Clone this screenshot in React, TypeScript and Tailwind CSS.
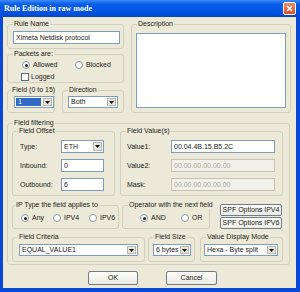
import React from "react";
import clsx from "clsx";

const font = "font-['Liberation_Sans',Arial,sans-serif] text-[7px] leading-[8px] text-[#1a1a1a]";

function Group({
    label,
    className,
    inner,
    legend,
    children,
}: {
    label: string;
    className?: string;
    inner?: string;
    legend?: string;
    children?: React.ReactNode;
}) {
    return (
        <fieldset className={clsx("min-w-0 rounded-[3px] border border-[#d0d0bf]", className)}>
            <legend className={clsx("whitespace-nowrap px-[1px] text-[7px] leading-[8px]", legend ?? "ml-[5px]")}>
                {label}
            </legend>
            <div className={inner}>{children}</div>
        </fieldset>
    );
}

function TextBox({
    value,
    className,
    disabled,
}: {
    value: string;
    className?: string;
    disabled?: boolean;
}) {
    return (
        <div
            className={clsx(
                "flex h-[13px] items-center border pl-[2px]",
                disabled
                    ? "border-[#c4c2b6] bg-[#f1f0ea] text-[#aca899]"
                    : "border-[#7f9db9] bg-white",
                className
            )}
        >
            {value}
        </div>
    );
}

function Combo({
    value,
    className,
    selected,
}: {
    value: string;
    className?: string;
    selected?: boolean;
}) {
    return (
        <div className={clsx("flex h-[12px] items-stretch border border-[#7f9db9] bg-white", className)}>
            <div
                className={clsx(
                    "flex flex-1 items-center whitespace-nowrap pl-[2px]",
                    selected && "m-[1px] bg-[#316ac5] text-white"
                )}
            >
                {value}
            </div>
            <div className="m-[1px] flex w-[9px] items-center justify-center border border-[#b9b7a9] bg-[#e8e6dc]">
                <svg width="5" height="3" viewBox="0 0 5 3">
                    <path d="M0 0H5L2.5 3Z" fill="#111" />
                </svg>
            </div>
        </div>
    );
}

function Radio({ checked, label, className }: { checked?: boolean; label: string; className?: string }) {
    return (
        <div className={clsx("flex items-center", className)}>
            <div className="flex h-[8px] w-[8px] items-center justify-center rounded-full border border-[#8a98a6] bg-white">
                {checked && <div className="h-[3px] w-[3px] rounded-full bg-[#222]" />}
            </div>
            <span className="ml-[3px]">{label}</span>
        </div>
    );
}

function Button({ label, className }: { label: string; className?: string }) {
    return (
        <div
            className={clsx(
                "flex items-center justify-center whitespace-nowrap rounded-[2px] border border-[#6f7c8a] bg-[linear-gradient(to_bottom,#fbfbf8,#ecebe4)]",
                className
            )}
        >
            {label}
        </div>
    );
}

export default function App() {
    return (
        <div className={clsx("flex h-[292px] w-[300px] flex-col bg-[#0848d8]", font)}>
            {/* title bar */}
            <div className="flex h-[17px] items-center justify-between bg-[linear-gradient(to_bottom,#3a8cf6,#0a5ce9_25%,#0353e2_70%,#0347cc)] pl-[4px] pr-[4px]">
                <span className="font-['Liberation_Serif','Times_New_Roman',serif] text-[8px] font-bold leading-[10px] text-white">
                    Rule Edition in raw mode
                </span>
                <div className="flex h-[13px] w-[13px] items-center justify-center rounded-[2px] border border-white bg-[linear-gradient(to_bottom,#ef8a66,#d8502a)]">
                    <svg width="7" height="7" viewBox="0 0 7 7">
                        <path d="M1 1L6 6M6 1L1 6" stroke="white" strokeWidth="1.6" />
                    </svg>
                </div>
            </div>

            {/* body */}
            <div className="mb-[4px] ml-[3px] mr-[4px] flex flex-1 flex-col bg-[#ece9d8] pl-[4px] pt-[3px]">
                <div className="flex">
                    <div className="flex w-[117px] flex-col">
                        <Group label="Rule Name" className="h-[29px]" inner="pl-[5px] pt-[3px]">
                            <TextBox value="Ximeta Netdisk protocol" className="w-[107px]" />
                        </Group>
                        <Group label="Packets are:" className="mt-[1px] h-[33px]" inner="pl-[14px] pt-[3px]">
                            <div className="flex h-[8px]">
                                <Radio checked label="Allowed" className="w-[53px]" />
                                <Radio label="Blocked" />
                            </div>
                            <div className="-ml-[1px] mt-[4px] flex h-[8px] items-center">
                                <div className="h-[8px] w-[8px] border border-[#4f6b85] bg-white" />
                                <span className="ml-[2px]">Logged</span>
                            </div>
                        </Group>
                        <div className="mt-[3px] flex">
                            <Group label="Field (0 to 15)" legend="ml-[3px]" className="h-[27px] w-[48px]" inner="pl-[6px] pt-[2px]">
                                <Combo value="1" selected className="w-[40px]" />
                            </Group>
                            <Group label="Direction" className="ml-[7px] h-[27px] w-[62px]" inner="pl-[5px] pt-[2px]">
                                <Combo value="Both" className="w-[50px]" />
                            </Group>
                        </div>
                    </div>
                    <Group label="Description" className="ml-[7px] h-[93px] w-[160px]" inner="pl-[4px] pt-[5px]">
                        <div className="h-[75px] w-[150px] border border-[#7f9db9] bg-white" />
                    </Group>
                </div>

                <Group label="Field filtering" className="mt-[6px] h-[146px] w-[283px]" inner="pl-[4px]">
                    <div className="flex">
                        <Group label="Field Offset" className="h-[69px] w-[103px]" inner="pl-[7px] pt-[5px]">
                            <div className="flex items-center">
                                <span className="w-[41px]">Type:</span>
                                <Combo value="ETH" className="h-[13px] w-[43px]" />
                            </div>
                            <div className="mt-[6px] flex items-center">
                                <span className="w-[41px]">Inbound:</span>
                                <TextBox value="0" className="w-[43px]" />
                            </div>
                            <div className="mt-[6px] flex items-center">
                                <span className="w-[41px]">Outbound:</span>
                                <TextBox value="6" className="w-[43px]" />
                            </div>
                        </Group>
                        <Group label="Field Value(s)" className="ml-[5px] h-[69px] w-[163px]" inner="pl-[6px] pt-[5px]">
                            <div className="flex items-center">
                                <span className="w-[44px]">Value1:</span>
                                <TextBox value="00.04.4B.15.B5.2C" className="w-[104px]" />
                            </div>
                            <div className="mt-[6px] flex items-center">
                                <span className="w-[44px]">Value2:</span>
                                <TextBox disabled value="00.00.00.00.00.00" className="w-[104px]" />
                            </div>
                            <div className="mt-[6px] flex items-center">
                                <span className="w-[44px]">Mask:</span>
                                <TextBox disabled value="00.00.00.00.00.00" className="w-[104px]" />
                            </div>
                        </Group>
                    </div>

                    <div className="mt-[5px] flex">
                        <Group label="IP Type the field applies to" legend="ml-[2px]" className="h-[28px] w-[107px]" inner="pl-[8px] pt-[5px]">
                            <div className="flex h-[8px]">
                                <Radio checked label="Any" className="w-[32px]" />
                                <Radio label="IPV4" className="w-[36px]" />
                                <Radio label="IPV6" />
                            </div>
                        </Group>
                        <Group label="Operator with the next field" legend="ml-[5px]" className="ml-[3px] h-[28px] w-[88px]" inner="pl-[17px] pt-[5px]">
                            <div className="flex h-[8px]">
                                <Radio checked label="AND" className="w-[41px]" />
                                <Radio label="OR" />
                            </div>
                        </Group>
                        <div className="ml-[10px] mt-[3px] flex flex-col gap-[1px]">
                            <Button label="SPF Options IPV4" className="h-[12px] w-[62px]" />
                            <Button label="SPF Options IPV6" className="h-[12px] w-[62px]" />
                        </div>
                    </div>

                    <div className="mt-[4px] flex">
                        <Group label="Field Criteria" className="h-[29px] w-[133px]" inner="pl-[6px] pt-[3px]">
                            <Combo value="EQUAL_VALUE1" className="w-[119px]" />
                        </Group>
                        <Group label="Field Size" className="ml-[3px] h-[29px] w-[47px]" inner="pl-[4px] pt-[3px]">
                            <Combo value="6 bytes" className="w-[38px]" />
                        </Group>
                        <Group label="Value Display Mode" className="ml-[5px] h-[29px] w-[83px]" inner="pl-[3px] pt-[3px]">
                            <Combo value="Hexa - Byte split" className="w-[74px]" />
                        </Group>
                    </div>
                </Group>

                <div className="ml-[81px] mt-[6px] flex">
                    <Button label="OK" className="h-[14px] w-[50px] border-[#3c4550]" />
                    <Button label="Cancel" className="ml-[28px] h-[14px] w-[51px]" />
                </div>
            </div>
        </div>
    );
}
